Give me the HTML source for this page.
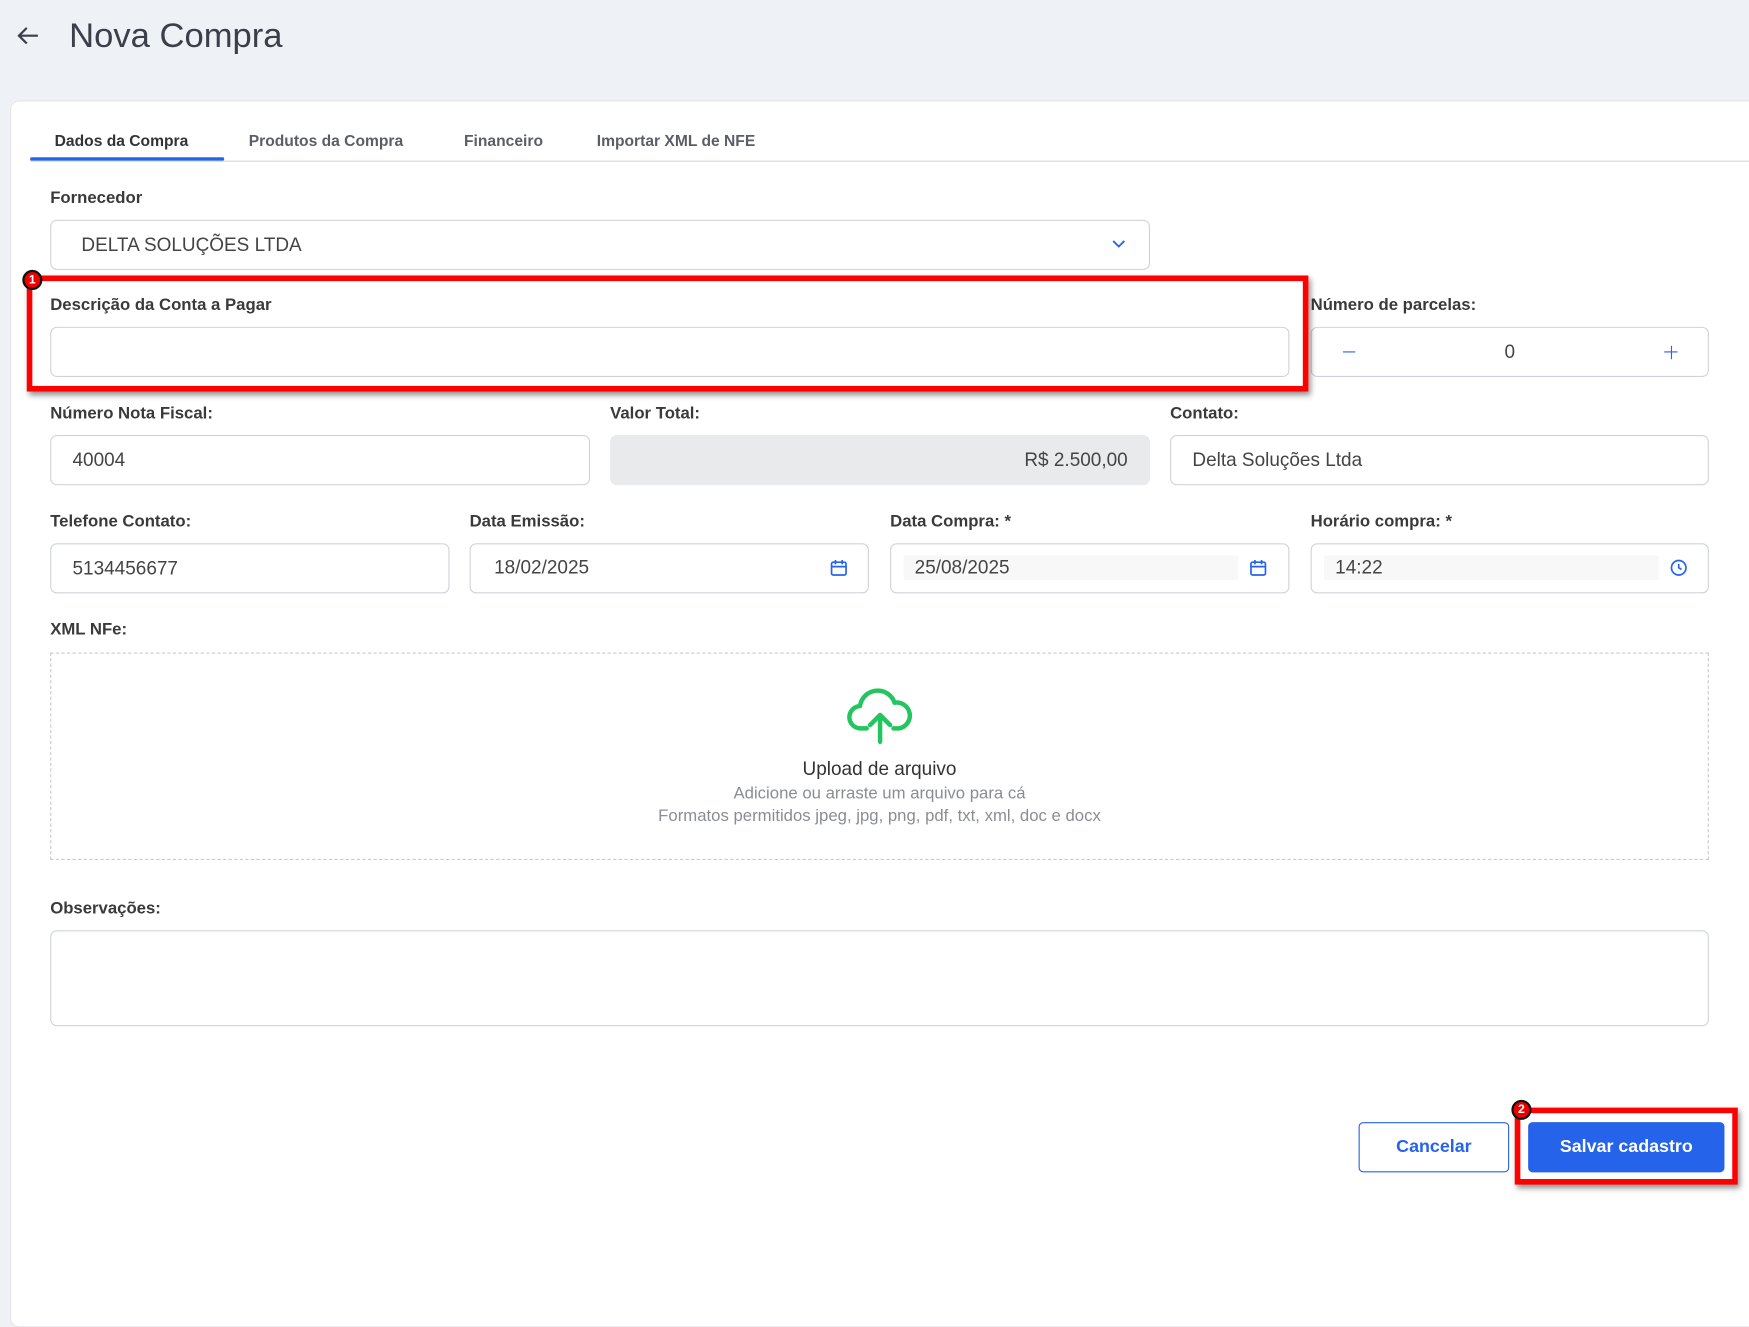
<!DOCTYPE html>
<html><head><meta charset="utf-8"><style>
*{box-sizing:border-box;margin:0;padding:0}
html,body{width:1749px;height:1188px;overflow:hidden;background:#eef1f6;font-family:"Liberation Sans",sans-serif}
#w{position:absolute;left:0;top:0;width:1568px;height:1065px;transform:scale(1.11543);transform-origin:0 0}
.a{position:absolute}
.card{left:9px;top:90px;width:1580px;height:1100px;background:#fff;border-radius:8px;border:1px solid #e3e6ea}
.lbl{position:absolute;font-size:15px;font-weight:bold;color:#3a3a3a}
.inp{position:absolute;border:1px solid #cfd3d8;border-radius:6px;background:#fff;height:45px;font-size:17px;color:#444;line-height:43px;padding-left:19px}
.tab{position:absolute;top:118px;font-size:14px;font-weight:bold;color:#5a5f66}
.badge{position:absolute;width:18px;height:18px;border-radius:50%;background:#e00;border:2px solid #111;color:#fff;font-size:11px;font-weight:bold;text-align:center;line-height:14px}
.red{position:absolute;border:5px solid #f00;box-shadow:2px 3px 5px rgba(0,0,0,.45)}
</style></head><body><div id="w">
<svg class="a" style="left:14px;top:22px" width="22" height="20" viewBox="0 0 22 20"><path d="M20 10H3M10 3L3 10l7 7" fill="none" stroke="#3a3f4a" stroke-width="2"/></svg>
<div class="a" style="left:62px;top:14px;font-size:31px;color:#3a3f4a">Nova Compra</div>
<div class="a card"></div>
<div class="tab" style="left:49px;color:#333">Dados da Compra</div>
<div class="tab" style="left:223px">Produtos da Compra</div>
<div class="tab" style="left:416px">Financeiro</div>
<div class="tab" style="left:535px">Importar XML de NFE</div>
<div class="a" style="left:27px;top:144px;width:1541px;height:1px;background:#d5d8dc"></div>
<div class="a" style="left:27px;top:141px;width:174px;height:3px;background:#2563eb;border-radius:2px"></div>

<div class="lbl" style="left:45px;top:169px">Fornecedor</div>
<div class="inp" style="left:45px;top:197px;width:986px;padding-left:27px">DELTA SOLUÇÕES LTDA</div>
<svg class="a" style="left:997px;top:214px" width="12" height="10"><path d="M1 2l5 5 5-5" fill="none" stroke="#2563eb" stroke-width="1.6"/></svg>

<div class="lbl" style="left:45px;top:265px">Descrição da Conta a Pagar</div>
<div class="inp" style="left:45px;top:293px;width:1111px"></div>
<div class="lbl" style="left:1175px;top:265px">Número de parcelas:</div>
<div class="inp" style="left:1175px;top:293px;width:357px;padding:0;text-align:center">0</div>
<div class="a" style="left:1204px;top:315px;width:11px;height:1px;background:#2563eb"></div>
<div class="a" style="left:1492px;top:315px;width:12px;height:1px;background:#2563eb"></div>
<div class="a" style="left:1497.5px;top:309.5px;width:1px;height:12px;background:#2563eb"></div>
<div class="red" style="left:24px;top:247px;width:1149px;height:104px"></div>
<div class="badge" style="left:20px;top:242px">1</div>

<div class="lbl" style="left:45px;top:362px">Número Nota Fiscal:</div>
<div class="inp" style="left:45px;top:390px;width:484px">40004</div>
<div class="lbl" style="left:547px;top:362px">Valor Total:</div>
<div class="inp" style="left:547px;top:390px;width:484px;background:#e9eaec;border-color:#e9eaec;text-align:right;padding-right:19px">R$ 2.500,00</div>
<div class="lbl" style="left:1049px;top:362px">Contato:</div>
<div class="inp" style="left:1049px;top:390px;width:483px">Delta Soluções Ltda</div>

<div class="lbl" style="left:45px;top:459px">Telefone Contato:</div>
<div class="inp" style="left:45px;top:487px;width:358px">5134456677</div>
<div class="lbl" style="left:421px;top:459px">Data Emissão:</div>
<div class="inp" style="left:421px;top:487px;width:358px;line-height:42px;padding-left:21px">18/02/2025</div>
<div class="lbl" style="left:798px;top:459px">Data Compra: *</div>
<div class="inp" style="left:798px;top:487px;width:358px;line-height:42px;padding-left:21px"><div class="a" style="left:11px;top:10px;width:300px;height:22px;background:#f8f8f8"></div><span style="position:relative">25/08/2025</span></div>
<div class="lbl" style="left:1175px;top:459px">Horário compra: *</div>
<div class="inp" style="left:1175px;top:487px;width:357px;line-height:42px;padding-left:21px"><div class="a" style="left:11px;top:10px;width:300px;height:22px;background:#f8f8f8"></div><span style="position:relative">14:22</span></div>
<svg class="a" style="left:744px;top:501px" width="16" height="16" viewBox="0 0 16 16"><rect x="1.5" y="3" width="13" height="11.5" rx="1.5" fill="none" stroke="#2563eb" stroke-width="1.5"/><path d="M1.5 7h13M5 1v4M11 1v4" stroke="#2563eb" stroke-width="1.5"/></svg>
<svg class="a" style="left:1120px;top:501px" width="16" height="16" viewBox="0 0 16 16"><rect x="1.5" y="3" width="13" height="11.5" rx="1.5" fill="none" stroke="#2563eb" stroke-width="1.5"/><path d="M1.5 7h13M5 1v4M11 1v4" stroke="#2563eb" stroke-width="1.5"/></svg>
<svg class="a" style="left:1497px;top:501px" width="16" height="16" viewBox="0 0 16 16"><circle cx="8" cy="8" r="6.5" fill="none" stroke="#2563eb" stroke-width="1.5"/><path d="M8 4.5V8l2.5 1.5" fill="none" stroke="#2563eb" stroke-width="1.5"/></svg>

<div class="lbl" style="left:45px;top:556px">XML NFe:</div>
<div class="a" style="left:45px;top:585px;width:1487px;height:186px;border:1.5px dashed #c8ccd0"></div>
<svg class="a" style="left:759px;top:617px" width="60" height="50" viewBox="0 0 60 50"><path d="M18 36H13a10 10 0 0 1-1-20A16 16 0 0 1 43 13a11 11 0 0 1 4 23h-5" fill="none" stroke="#22c55e" stroke-width="4" stroke-linecap="round" stroke-linejoin="round"/><path d="M30 48V25M21 33l9-9 9 9" fill="none" stroke="#22c55e" stroke-width="4" stroke-linecap="round" stroke-linejoin="round"/></svg>
<div class="a" style="left:45px;top:680px;width:1487px;text-align:center;font-size:17px;color:#333">Upload de arquivo</div>
<div class="a" style="left:45px;top:702px;width:1487px;text-align:center;font-size:15px;color:#8a8d91;line-height:20px">Adicione ou arraste um arquivo para cá<br>Formatos permitidos jpeg, jpg, png, pdf, txt, xml, doc e docx</div>

<div class="lbl" style="left:45px;top:806px">Observações:</div>
<div class="inp" style="left:45px;top:834px;width:1487px;height:86px"></div>

<div class="a" style="left:1218px;top:1006px;width:135px;height:45px;border:1px solid #2563eb;border-radius:4px;color:#2563eb;font-weight:bold;font-size:16px;text-align:center;line-height:43px">Cancelar</div>
<div class="a" style="left:1370px;top:1006px;width:176px;height:45px;background:#2563eb;border-radius:4px;color:#fff;font-weight:bold;font-size:16px;text-align:center;line-height:45px">Salvar cadastro</div>
<div class="red" style="left:1358px;top:993px;width:200px;height:69px"></div>
<div class="badge" style="left:1355px;top:986px">2</div>
</div></body></html>
